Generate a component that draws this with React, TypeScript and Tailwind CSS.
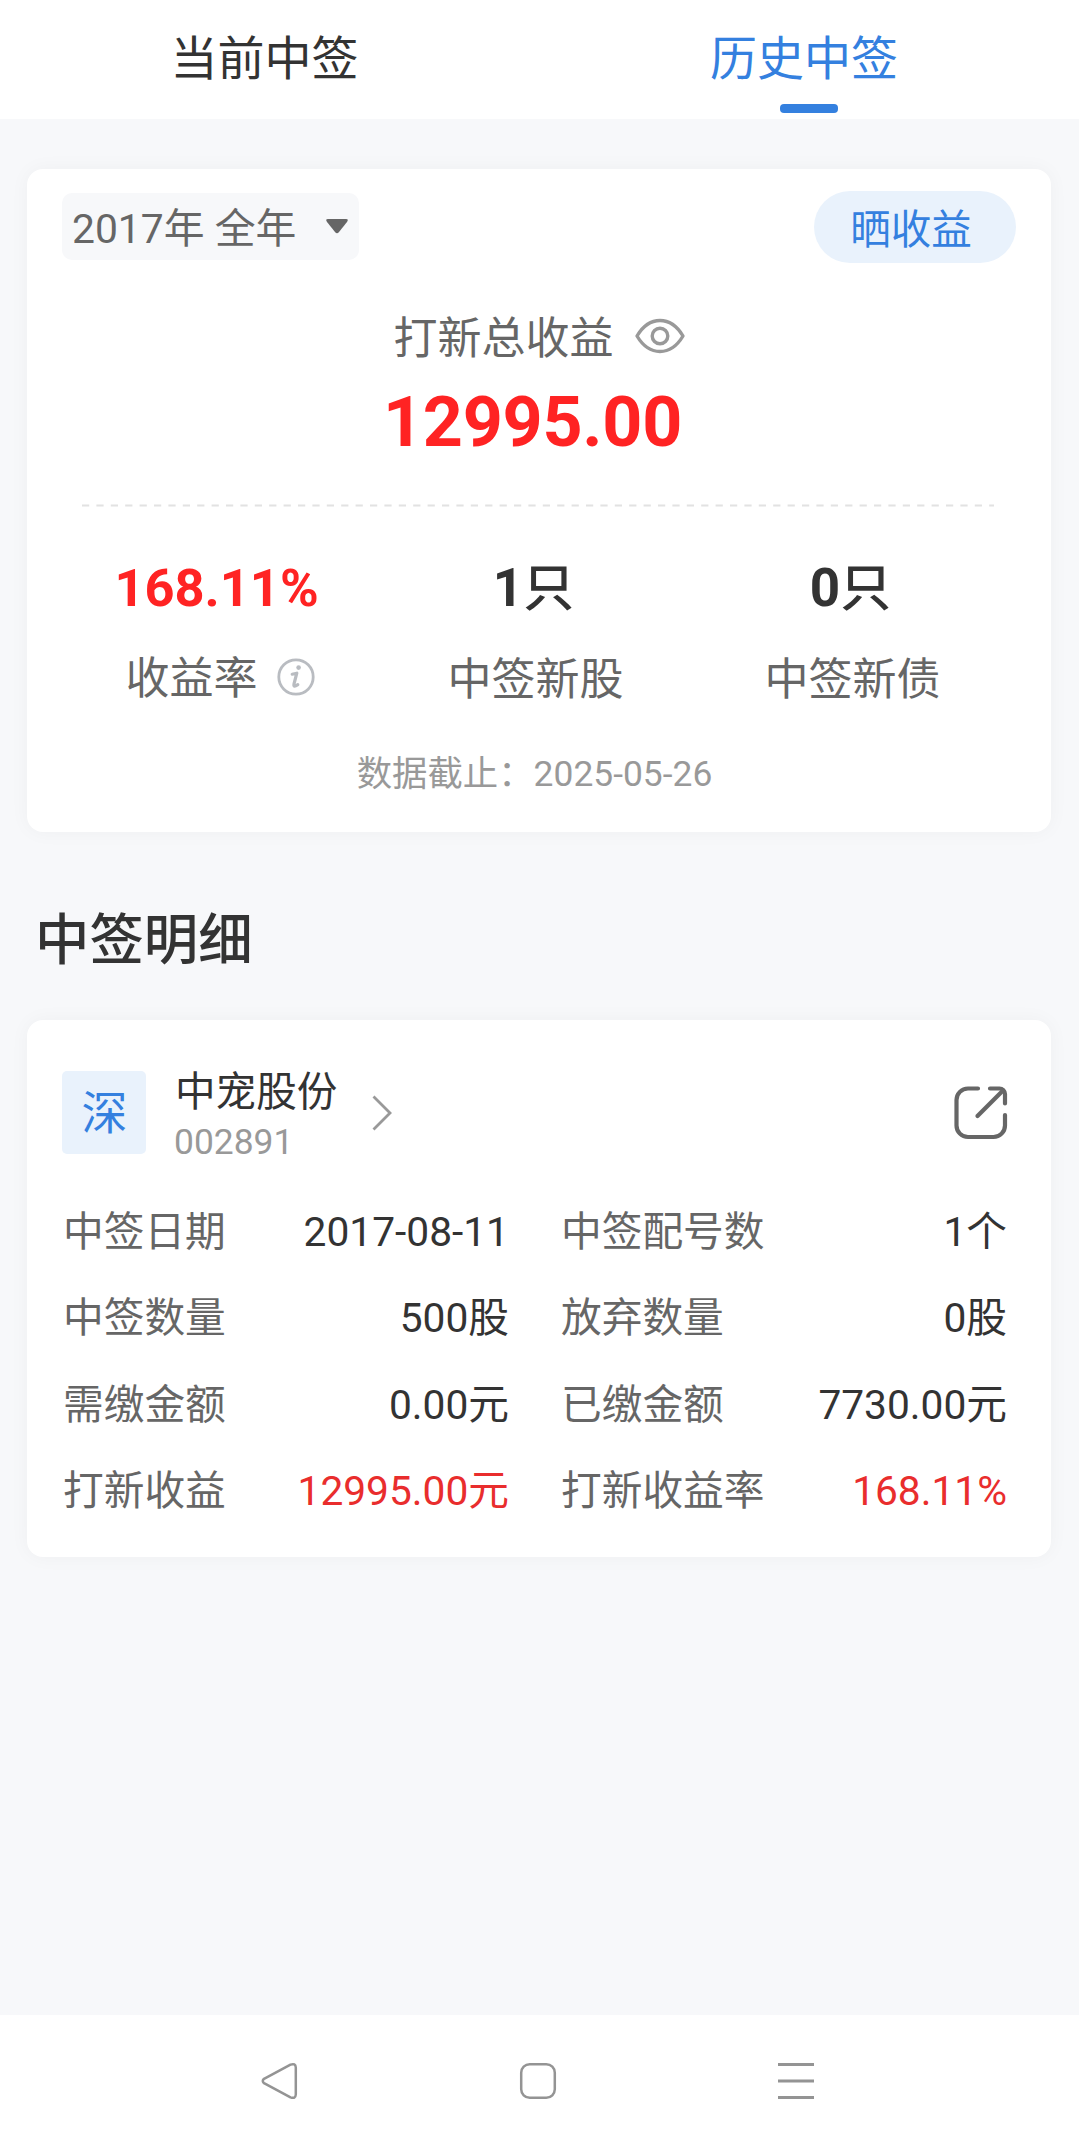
import React from "react";

type Stat = { value: string; unit?: string; label: string; red?: boolean; info?: boolean };
type Cell = { label: string; value: string; red?: boolean };

const stats: Stat[] = [
    { value: "168.11%", label: "收益率", red: true, info: true },
    { value: "1", unit: "只", label: "中签新股" },
    { value: "0", unit: "只", label: "中签新债" },
];

const details: Cell[] = [
    { label: "中签日期", value: "2017-08-11" },
    { label: "中签配号数", value: "1个" },
    { label: "中签数量", value: "500股" },
    { label: "放弃数量", value: "0股" },
    { label: "需缴金额", value: "0.00元" },
    { label: "已缴金额", value: "7730.00元" },
    { label: "打新收益", value: "12995.00元", red: true },
    { label: "打新收益率", value: "168.11%", red: true },
];

const EyeIcon = () => (
    <svg className="mb-[6px]" width="50" height="36" viewBox="0 0 50 36" fill="none" stroke="#999999" strokeWidth="3.4">
        <path d="M2 18C8 8 16 2.5 25 2.5S42 8 48 18C42 28 34 33.5 25 33.5S8 28 2 18Z" strokeLinejoin="round" />
        <circle cx="25" cy="18" r="7.8" />
    </svg>
);

const InfoIcon = () => (
    <svg className="mb-[4px]" width="38" height="38" viewBox="0 0 38 38" fill="none" stroke="#b9bcc1">
        <circle cx="19" cy="19" r="17.2" strokeWidth="2.8" />
        <circle cx="21.6" cy="9.6" r="2.3" fill="#b9bcc1" stroke="none" />
        <path d="M15.200 16.200L19.800 15.200L17 26Q16.200 29.800 20.800 26.600" strokeWidth="3.2" strokeLinecap="round" strokeLinejoin="round" />
    </svg>
);

const ShareIcon = () => (
    <svg width="54" height="54" viewBox="0 0 54 54" fill="none" stroke="#666666" strokeWidth="4.2" strokeLinecap="round" strokeLinejoin="round">
        <path d="M24 2.5H14A11.5 11.5 0 0 0 2.5 14V39.5A11.5 11.5 0 0 0 14 51H39.5A11.5 11.5 0 0 0 51 39.5V29" />
        <path d="M36 2.5H45.5A5.5 5.5 0 0 1 51 8V17.5" />
        <path d="M49 4.5L23.5 30" />
    </svg>
);

const Tabs = () => (
    <div className="h-[119px] w-full bg-white flex flex-row text-[47px] leading-[117px]">
        <div className="w-[529px] text-center text-[#333333]">当前中签</div>
        <div className="relative flex-1 text-center text-[#3480df]">
            <p>历史中签</p>
            <div className="absolute left-[251px] top-[104px] h-[9px] w-[58px] rounded-[4px] bg-[#3480df]" />
        </div>
    </div>
);

const SummaryCard = () => (
    <div className="mx-[27px] mt-[50px] h-[663px] w-[1024px] rounded-2xl bg-white shadow-[0_0_20px_rgba(0,0,0,0.04)]">
        <div className="flex flex-row items-start justify-between px-[35px] pt-[22px]">
            <div className="mt-[2px] flex h-[67px] w-[297px] flex-row items-center justify-between rounded-[10px] bg-[#f7f8fa] pl-[10px] pr-[11px]">
                <p className="pt-[5px] text-[40.8px] leading-[62px] text-[#666666]">2017年 全年</p>
                <svg width="22" height="15" viewBox="0 0 22 15" fill="#666666">
                    <path d="M2 0H20Q23 0 21 3L13 13Q11 15.500 9 13L1 3Q-1 0 2 0Z" />
                </svg>
            </div>
            <div className="h-[72px] w-[202px] rounded-full bg-[#e9f2fc] pr-[8px] pt-[2px] text-center text-[40.6px] leading-[74px] text-[#3480df]">
                晒收益
            </div>
        </div>

        {/* total profit */}
        <div className="mt-[46px] flex flex-row items-center justify-center gap-[21px] leading-[60px]">
            <p className="text-[44px] text-[#666666]">打新总收益</p>
            <EyeIcon />
        </div>
        <p className="mt-[13px] pr-[13px] text-center text-[70px] font-bold leading-[80px] tracking-[-0.3px] text-[#ff2323]">12995.00</p>

        <svg className="ml-[55px] mt-[42px] block" width="912" height="3">
            <line x1="0" y1="1.5" x2="912" y2="1.5" stroke="#e2e2e2" strokeWidth="2" strokeDasharray="7.200 7.200" />
        </svg>

        <div className="ml-[31px] mt-[49px] flex w-[951px] flex-row">
            {stats.map((s) => (
                <div key={s.label} className="flex w-[317px] flex-col items-center">
                    <p className={s.red ? "text-[52.4px] font-bold leading-[64px] text-[#ff2323]" : "text-[53px] font-bold leading-[64px] text-[#333333]"}>
                        {s.value}
                        {s.unit && <span className="text-[51px] font-medium">{s.unit}</span>}
                    </p>
                    <div className={s.info ? "mt-[29px] flex flex-row items-center gap-[19px] pl-[7px] text-[44px] leading-[60px] text-[#666666]" : "mt-[29px] pl-[4px] text-[44px] leading-[60px] text-[#666666]"}>
                        {s.label}
                        {s.info && <InfoIcon />}
                    </div>
                </div>
            ))}
        </div>

        <p className="mt-[39px] pr-[9px] text-center text-[35.400px] leading-[50px] text-[#999999]">数据截止：2025-05-26</p>
    </div>
);

const DetailCard = () => (
    <div className="mx-[27px] h-[537px] w-[1024px] rounded-2xl bg-white px-[35px] pt-[46px] shadow-[0_0_20px_rgba(0,0,0,0.04)]">
        <div className="flex flex-row">
            <div className="mt-[5px] h-[83px] w-[84px] rounded-[5px] bg-[#e9f2fc] pl-px text-center text-[46px] leading-[85px] text-[#3480df]">深</div>
            <div className="ml-[28px] -mt-px">
                <p className="pl-px text-[40.6px] leading-[54px] text-[#333333]">中宠股份</p>
                <p className="text-[35.4px] leading-[46px] text-[#999999]">002891</p>
            </div>
            <svg className="ml-[35px] mt-[29px]" width="20" height="36" viewBox="0 0 20 36" fill="none" stroke="#999999" strokeWidth="2.8">
                <path d="M1.500 1.500L18 18L1.500 34.500" />
            </svg>
            <div className="ml-auto mr-[8px] mt-[20px]">
                <ShareIcon />
            </div>
        </div>

        <div className="mt-[24px] grid grid-cols-2 gap-x-[52px] pl-px pr-[9px] text-[40.7px] leading-[86.4px]">
            {details.map((d) => (
                <div key={d.label} className="flex flex-row justify-between whitespace-nowrap">
                    <p className="text-[#666666]">{d.label}</p>
                    <p className={d.red ? "text-[#e92d2d]" : "text-[#333333]"}>{d.value}</p>
                </div>
            ))}
        </div>
    </div>
);

const NavBar = () => (
    <div className="flex h-[131px] w-full flex-row items-center bg-white pl-[261px] pt-px">
        <svg width="38" height="38" viewBox="0 0 38 38" fill="none" stroke="#949494" strokeWidth="2.5" strokeLinejoin="round">
            <path d="M3 16.800L29.500 2.700Q34.500 0.800 34.800 5.500V32.500Q34.500 37.200 29.500 35.300L3 21.200Q0.500 19 3 16.800Z" />
        </svg>
        <svg className="ml-[220px]" width="38" height="38" viewBox="0 0 38 38" fill="none" stroke="#949494" strokeWidth="2.5">
            <rect x="2.200" y="2.200" width="33.600" height="33.600" rx="8.500" />
        </svg>
        <svg className="ml-[220px]" width="38" height="38" viewBox="0 0 38 38" stroke="#949494" strokeWidth="3">
            <path d="M1 2.500H37M1 19H37M1 35.500H37" />
        </svg>
    </div>
);

const App = () => {
    return (
        <div className="flex h-[2146px] w-[1079px] flex-col overflow-hidden bg-[#f7f8fa] font-['Roboto','Noto_Sans_CJK_SC',sans-serif]">
            <Tabs />
            <SummaryCard />
            <h2 className="ml-[35px] mt-[69px] mb-[39px] text-[54.4px] font-medium leading-[80px] text-[#333333]">中签明细</h2>
            <DetailCard />
            <div className="flex-1" />
            <NavBar />
        </div>
    );
};

export default App;
